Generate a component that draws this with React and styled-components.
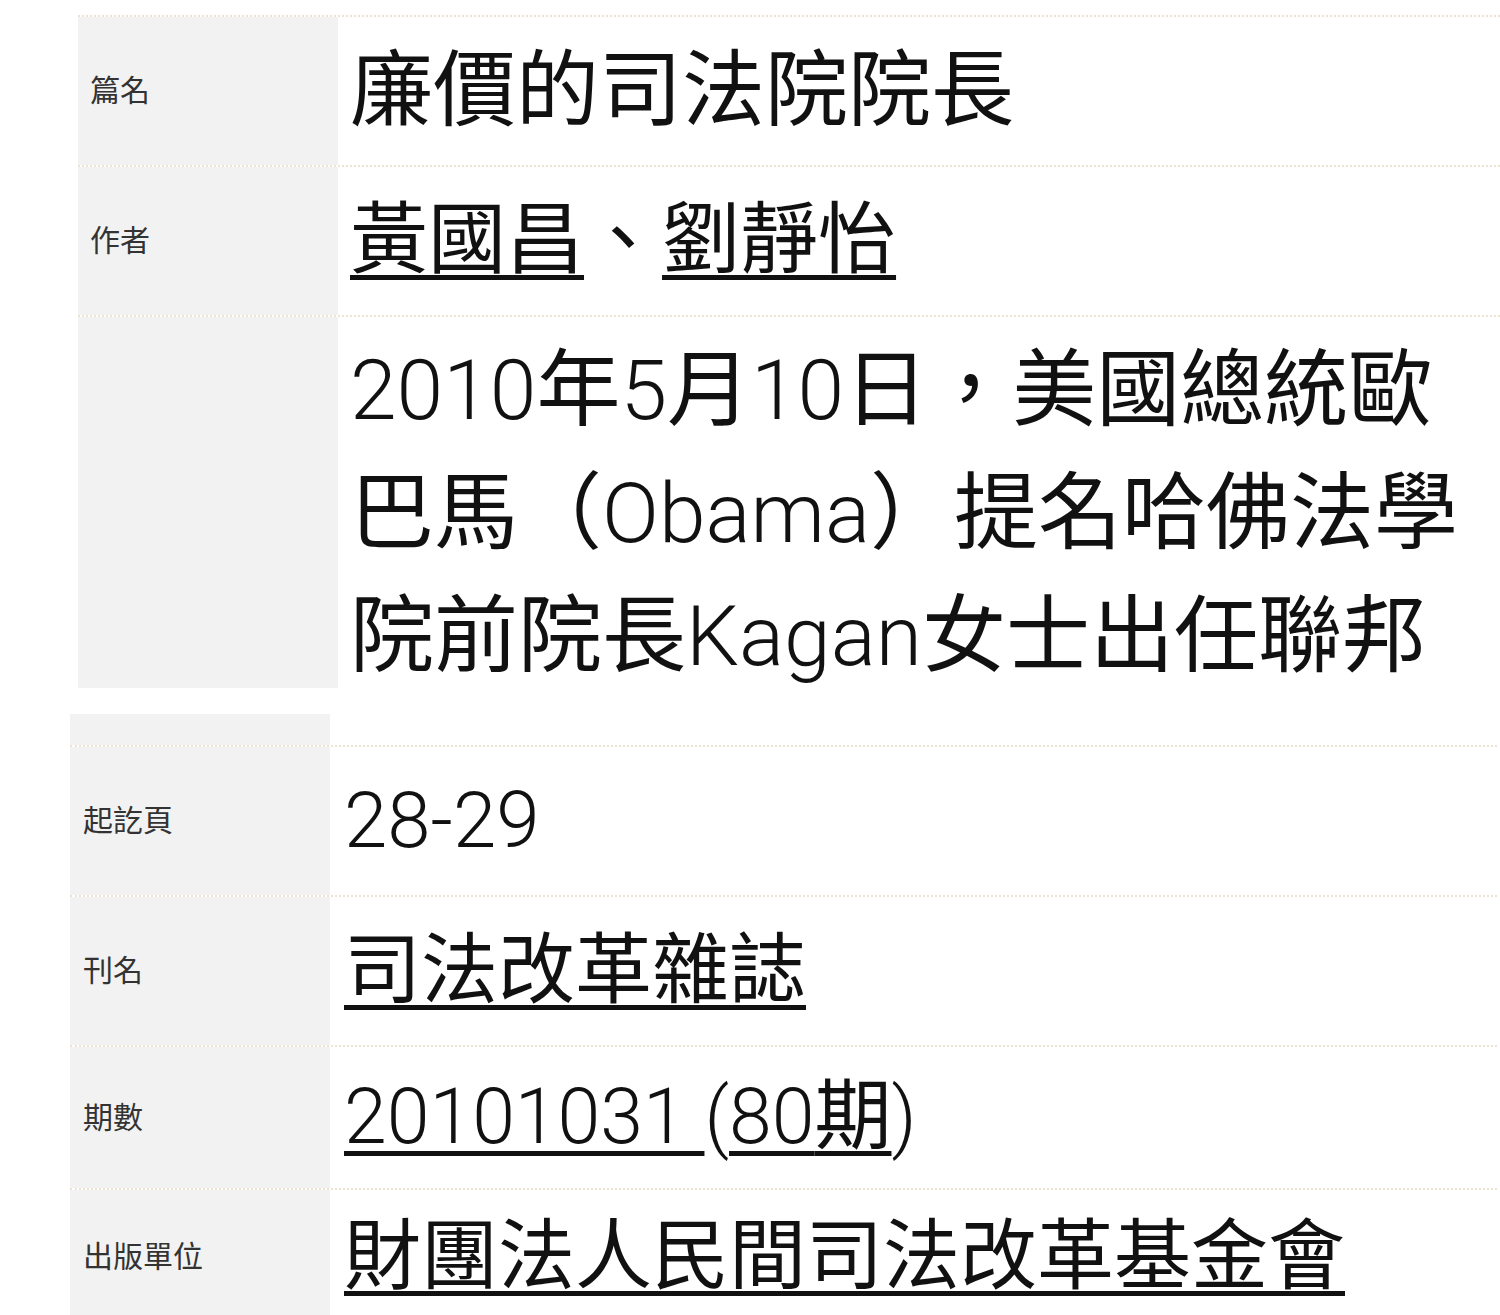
import React from 'react'
import styled, { createGlobalStyle } from 'styled-components'

const GlobalStyle = createGlobalStyle`
  html, body {
    margin: 0;
    padding: 0;
    background: #ffffff;
    overflow: hidden;
  }
  body {
    font-family: Roboto, "Noto Sans CJK TC", "Noto Sans", sans-serif;
    color: #111111;
  }
`;

const Pagina = styled.div`
  padding-top: 15px;
  width: 1500px;
`;

const Bloco = styled.section`
  margin-left: ${p => p.$left}px;
  width: ${p => p.$width}px;
  margin-bottom: ${p => p.$gap || 0}px;
`;

const Linha = styled.div`
  display: grid;
  grid-template-columns: 260px 1fr;
  box-sizing: border-box;
  height: ${p => p.$height}px;
  border-top: ${p => (p.$semBorda ? 'none' : '2px dotted #ece3d2')};
  overflow: hidden;
`;

const Rotulo = styled.div`
  background: #f2f2f2;
  display: flex;
  align-items: center;
  box-sizing: border-box;
  padding: 0 0 6px ${p => p.$pad}px;
  font-size: 30px;
  color: #333333;
`;

const Valor = styled.div`
  display: flex;
  align-items: center;
  padding-left: ${p => p.$pad}px;
  font-size: ${p => p.$size}px;
  line-height: 1.2;
  color: #111111;
  white-space: nowrap;
`;

const Resumo = styled.div`
  padding: 12px 0 0 ${p => p.$pad}px;
  font-size: 84px;
  line-height: 123px;
  color: #111111;
  max-width: 1150px;
`;

// Latin digits and letters render lighter than the CJK glyphs
const Latino = styled.span`
  font-weight: 300;
`;

const Link = styled.span`
  text-decoration: underline;
  text-decoration-thickness: 5px;
  text-underline-offset: 8px;
  text-decoration-skip-ink: none;
  color: #111111;
`;

export default function App() {
  return (
    <Pagina>
      <GlobalStyle />
      <Bloco $left={78} $width={1422} $gap={26}>
        <Linha $height={150}>
          <Rotulo $pad={12}>篇名</Rotulo>
          <Valor $pad={12} $size={83}>廉價的司法院院長</Valor>
        </Linha>
        <Linha $height={150}>
          <Rotulo $pad={12}>作者</Rotulo>
          <Valor $pad={12} $size={78}>
            <Link>黃國昌</Link>、<Link>劉靜怡</Link>
          </Valor>
        </Linha>
        <Linha $height={373}>
          <Rotulo $pad={12}></Rotulo>
          <Resumo $pad={12}>
            <Latino>2010</Latino>年<Latino>5</Latino>月<Latino>10</Latino>日，美國總統歐巴馬（<Latino>Obama</Latino>）提名哈佛法學院前院長<Latino>Kagan</Latino>女士出任聯邦
          </Resumo>
        </Linha>
      </Bloco>
      <Bloco $left={70} $width={1427}>
        <Linha $height={31} $semBorda>
          <Rotulo $pad={13}></Rotulo>
          <div />
        </Linha>
        <Linha $height={150}>
          <Rotulo $pad={13}>起訖頁</Rotulo>
          <Valor $pad={14} $size={78}><Latino>28-29</Latino></Valor>
        </Linha>
        <Linha $height={150}>
          <Rotulo $pad={13}>刊名</Rotulo>
          <Valor $pad={14} $size={77}>
            <Link>司法改革雜誌</Link>
          </Valor>
        </Linha>
        <Linha $height={143}>
          <Rotulo $pad={13}>期數</Rotulo>
          <Valor $pad={14} $size={77}>
            <Link><Latino>20101031&nbsp;</Latino></Link><Latino>(</Latino><Link><Latino>80</Latino>期</Link><Latino>)</Latino>
          </Valor>
        </Linha>
        <Linha $height={136}>
          <Rotulo $pad={13}>出版單位</Rotulo>
          <Valor $pad={14} $size={77}>
            <Link>財團法人民間司法改革基金會</Link>
          </Valor>
        </Linha>
      </Bloco>
    </Pagina>
  )
}
